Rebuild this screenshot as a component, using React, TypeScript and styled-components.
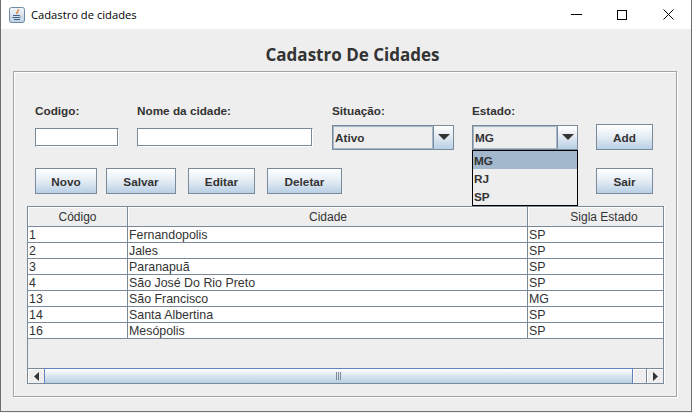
import React from "react";
import styled, { createGlobalStyle } from "styled-components";

const Global = createGlobalStyle`
  html, body { margin: 0; padding: 0; background: #f1f1f1; }
  #root { width: 692px; height: 413px; overflow: hidden; }
  * { box-sizing: border-box; }
`;

const Win = styled.div`
  width: 692px;
  height: 412px;
  border: 1px solid #6f6f6f;
  border-top: 0;
  background: #eeeeee;
  display: flex;
  flex-direction: column;
  font-family: "Liberation Sans", Arial, sans-serif;
  color: #333333;
`;

const TitleBar = styled.header`
  height: 29px;
  background: #fff;
  display: flex;
  align-items: center;
  padding-left: 8px;
  flex: none;
`;

const AppTitle = styled.span`
  margin-left: 6px;
  font: 11.2px "Open Sans", "Noto Sans", sans-serif;
  color: #000;
`;

const WinButtons = styled.div`
  margin-left: auto;
  display: flex;
  height: 100%;
`;

const WinButton = styled.div`
  width: 46px;
  display: flex;
  align-items: center;
  justify-content: center;
  color: #000;
`;

const Heading = styled.h1`
  margin: 0;
  height: 42px;
  padding: 14px 0 0 13px;
  text-align: center;
  font: bold 17px/24px "Open Sans", sans-serif;
  color: #333333;
  flex: none;
`;

const Panel = styled.section`
  position: relative;
  width: 664px;
  height: 326px;
  margin-left: 12px;
  border: 1px solid #a3a3a3;
  box-shadow: inset 1px 1px 0 #fff, 1px 1px 0 #fff;
  padding: 31px 0 0 21px;
`;

const LabelRow = styled.div`
  display: grid;
  grid-template-columns: 102px 195px 140px auto;
  height: 16px;
`;

const FieldLabel = styled.label`
  font: bold 11.75px/16px "Liberation Sans", sans-serif;
  color: #333333;
`;

const ControlRow = styled.div`
  display: flex;
  align-items: center;
  height: 26px;
  margin-top: 5px;
`;

const TextInput = styled.div<{ $w: number; $mr: number }>`
  width: ${(p) => p.$w}px;
  margin-right: ${(p) => p.$mr}px;
  height: 19px;
  background: #fff;
  border: 1px solid #7a8a99;
  border-right-color: #fff;
  border-bottom-color: #fff;
  box-shadow: inset 0 -1px 0 #7a8a99, inset -1px 0 0 #7a8a99;
`;

const Combo = styled.div<{ $w: number; $mr: number }>`
  position: relative;
  width: ${(p) => p.$w}px;
  margin-right: ${(p) => p.$mr}px;
  height: 25px;
  display: flex;
  border: 1px solid #7a8a99;
  background: #eeeeee;
`;

const ComboValue = styled.div`
  flex: 1;
  border: 1px solid #a3b8cc;
  border-right: 1px solid #7a8a99;
  box-shadow: inset -1px 0 0 #a3b8cc;
  padding-left: 1px;
  font: bold 11.75px/21px "Liberation Sans", sans-serif;
  color: #333333;
`;

const ComboArrow = styled.div`
  width: 19px;
  display: flex;
  align-items: center;
  justify-content: center;
  background: linear-gradient(#ffffff, #dce6f0 55%, #b8cfe5);
`;

const Popup = styled.ul`
  position: absolute;
  left: -1px;
  top: 24px;
  width: 106px;
  height: 56px;
  margin: 0;
  padding: 0;
  list-style: none;
  background: #eeeeee;
  border: 1px solid #000;
  z-index: 3;
`;

const PopupItem = styled.li<{ $on?: boolean }>`
  height: 18px;
  padding-left: 1px;
  font: bold 11.75px/19px "Liberation Sans", sans-serif;
  color: #333333;
  background: ${(p) => (p.$on ? "#a3b8cc" : "transparent")};
`;

const Btn = styled.button<{ $w: number; $mr?: number }>`
  width: ${(p) => p.$w}px;
  margin-right: ${(p) => p.$mr ?? 0}px;
  height: 26px;
  padding: 0;
  border: 1px solid #7a8a99;
  background: linear-gradient(#ffffff, #e4ecf4 50%, #b8cfe5);
  font: bold 11.75px "Liberation Sans", sans-serif;
  color: #333333;
  flex: none;
`;

const ActionRow = styled.div`
  display: flex;
  height: 26px;
  margin-top: 18px;
`;

const Spacer = styled.div`
  flex: none;
  width: 254px;
`;

const TableBox = styled.div`
  width: 637px;
  height: 178px;
  margin: 12px 0 0 -8px;
  border: 1px solid #7a8a99;
  border-bottom: 0;
  box-shadow: 1px 0 0 #fff;
  display: flex;
  flex-direction: column;
`;

const Table = styled.table`
  width: 635px;
  table-layout: fixed;
  border-collapse: separate;
  border-spacing: 0;
  font: 12.4px "Liberation Sans", sans-serif;
  color: #333333;
`;

const Th = styled.th<{ $shift?: number; $last?: boolean }>`
  height: 20px;
  padding: 0 0 0 ${(p) => p.$shift ?? 0}px;
  font: 12px "Liberation Sans", sans-serif;
  background: #eeeeee;
  border-right: ${(p) => (p.$last ? "0" : "1px solid #7a8a99")};
  border-bottom: 1px solid #7a8a99;
  box-shadow: inset 1px 1px 0 #fff;
`;

const Td = styled.td`
  height: 16px;
  padding: 1px 0 0 1px;
  line-height: 14px;
  background: #fff;
  border-right: 1px solid #7a8a99;
  border-bottom: 1px solid #7a8a99;
  white-space: nowrap;
  &:last-child { border-right: 0; }
`;

const ScrollBar = styled.div`
  margin-top: auto;
  height: 16px;
  display: flex;
  border-bottom: 1px solid #7a8a99;
  background: #eeeeee;
`;

const ScrollEnd = styled.div`
  width: 16px;
  flex: none;
  display: flex;
  align-items: center;
  justify-content: center;
  box-shadow: inset 1px 1px 0 #fff;
  border-top: 1px solid #7a8a99;
`;

const Thumb = styled.div`
  width: 589px;
  margin-bottom: -1px;
  border: 1px solid #6382bf;
  border-bottom-color: #7a8a99;
  background: linear-gradient(#ffffff, #e4ecf4 35%, #b8cfe5);
  display: flex;
  align-items: center;
  justify-content: center;
`;

const Track = styled.div`
  flex: 1;
  border-top: 1px solid #7a8a99;
  border-right: 1px solid #7a8a99;
  box-shadow: inset 1px 1px 0 #fff;
`;

const Arrow = ({ w = 12, h = 6 }: { w?: number; h?: number }) => (
  <svg width={w} height={h} viewBox="0 0 12 6"><path d="M0 0h12L6 6z" fill="#333" /></svg>
);

const rows: [string, string, string][] = [
  ["1", "Fernandopolis", "SP"],
  ["2", "Jales", "SP"],
  ["3", "Paranapuã", "SP"],
  ["4", "São José Do Rio Preto", "SP"],
  ["13", "São Francisco", "MG"],
  ["14", "Santa Albertina", "SP"],
  ["16", "Mesópolis", "SP"],
];

export default function App() {
  return (
    <>
      <Global />
      <Win>
        <TitleBar>
          <svg width="16" height="16" viewBox="0 0 16 16">
            <defs>
              <linearGradient id="tile" x1="0" y1="0" x2="0" y2="1">
                <stop offset="0" stopColor="#f4f7fa" />
                <stop offset="1" stopColor="#bccfe2" />
              </linearGradient>
            </defs>
            <rect x=".5" y=".5" width="15" height="15" rx="2" fill="url(#tile)" stroke="#6d8aa6" />
            <path d="M9 2c1 2-2.500 2.800-1 5.200C7.600 5.600 10.800 5 9 2z" fill="#e2702a" stroke="#e2702a" strokeWidth=".5" />
            <path d="M4 8.500h6.500l1 .8M3.500 10.500h7.500M5 12.500h6" stroke="#3f6489" strokeWidth="1" fill="none" />
          </svg>
          <AppTitle>Cadastro de cidades</AppTitle>
          <WinButtons>
            <WinButton>
              <svg width="11" height="11" viewBox="0 0 11 11"><path d="M0 5.500h11" stroke="#000" /></svg>
            </WinButton>
            <WinButton>
              <svg width="10" height="10" viewBox="0 0 10 10"><rect x=".5" y=".5" width="9" height="9" fill="none" stroke="#000" /></svg>
            </WinButton>
            <WinButton>
              <svg width="11" height="11" viewBox="0 0 11 11"><path d="M.5.500l10 10M10.500.500l-10 10" stroke="#000" fill="none" /></svg>
            </WinButton>
          </WinButtons>
        </TitleBar>
        <Heading>Cadastro De Cidades</Heading>
        <Panel>
          <LabelRow>
            <FieldLabel>Codigo:</FieldLabel>
            <FieldLabel>Nome da cidade:</FieldLabel>
            <FieldLabel>Situação:</FieldLabel>
            <FieldLabel>Estado:</FieldLabel>
          </LabelRow>
          <ControlRow>
            <TextInput $w={84} $mr={18} />
            <TextInput $w={176} $mr={19} />
            <Combo $w={122} $mr={18}>
              <ComboValue>Ativo</ComboValue>
              <ComboArrow><Arrow /></ComboArrow>
            </Combo>
            <Combo $w={106} $mr={18}>
              <ComboValue>MG</ComboValue>
              <ComboArrow><Arrow /></ComboArrow>
              <Popup>
                <PopupItem $on>MG</PopupItem>
                <PopupItem>RJ</PopupItem>
                <PopupItem>SP</PopupItem>
              </Popup>
            </Combo>
            <Btn $w={57}>Add</Btn>
          </ControlRow>
          <ActionRow>
            <Btn $w={62} $mr={9}>Novo</Btn>
            <Btn $w={70} $mr={12}>Salvar</Btn>
            <Btn $w={67} $mr={12}>Editar</Btn>
            <Btn $w={75}>Deletar</Btn>
            <Spacer />
            <Btn $w={57}>Sair</Btn>
          </ActionRow>
          <TableBox>
            <Table>
              <colgroup>
                <col width="100" />
                <col width="400" />
                <col width="135" />
              </colgroup>
              <thead>
                <tr>
                  <Th>Código</Th>
                  <Th $shift={1}>Cidade</Th>
                  <Th $shift={17} $last>Sigla Estado</Th>
                </tr>
              </thead>
              <tbody>
                {rows.map((r) => (
                  <tr key={r[0]}>
                    <Td>{r[0]}</Td>
                    <Td>{r[1]}</Td>
                    <Td>{r[2]}</Td>
                  </tr>
                ))}
              </tbody>
            </Table>
            <ScrollBar>
              <ScrollEnd>
                <svg width="5" height="9" viewBox="0 0 5 9"><path d="M5 0v9L0 4.500z" fill="#333" /></svg>
              </ScrollEnd>
              <Thumb>
                <svg width="5" height="8" viewBox="0 0 5 8"><path d="M.5 0v8M2.500 0v8M4.500 0v8" stroke="#7a8a99" /></svg>
              </Thumb>
              <Track />
              <ScrollEnd>
                <svg width="5" height="9" viewBox="0 0 5 9"><path d="M0 0v9l5-4.500z" fill="#333" /></svg>
              </ScrollEnd>
            </ScrollBar>
          </TableBox>
        </Panel>
      </Win>
    </>
  );
}
